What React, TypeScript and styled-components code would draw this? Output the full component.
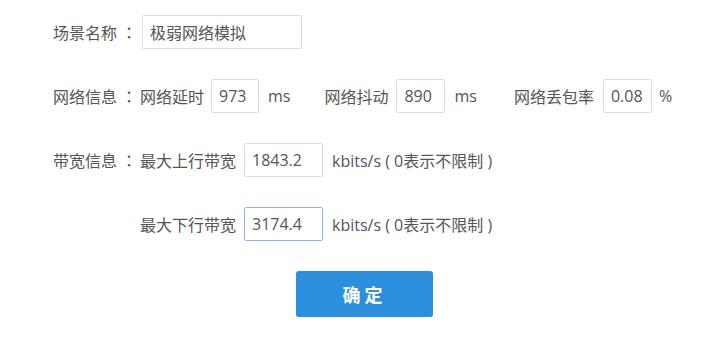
import styled, { createGlobalStyle } from "styled-components";

const GlobalStyle = createGlobalStyle`
  body {
    margin: 0;
    background: #fff;
    font-family: "Open Sans", "Noto Sans CJK SC", sans-serif;
    font-size: 16px;
    color: #555;
  }
`;

const Form = styled.div`
  display: flex;
  flex-direction: column;
  gap: 30px;
  padding: 15px 0 0 53px;
`;

const Row = styled.div<{ $indent?: boolean }>`
  display: flex;
  align-items: center;
  height: 34px;
  padding-left: ${(p) => (p.$indent ? "87px" : "0")};
`;

const Label = styled.span`
  display: flex;
  width: 87px;
  white-space: nowrap;
`;

const Colon = styled.span`
  font-family: "Noto Sans CJK TC", sans-serif;
  margin-left: 4px;
`;

const Group = styled.div<{ $ml?: number }>`
  display: flex;
  align-items: center;
  margin-left: ${(p) => p.$ml ?? 0}px;
`;

const Name = styled.span`
  white-space: nowrap;
`;

const Input = styled.input<{ $w: number; $focus?: boolean; $ml?: number; $mr?: number }>`
  box-sizing: border-box;
  width: ${(p) => p.$w}px;
  height: 34px;
  margin-left: ${(p) => p.$ml ?? 8}px;
  margin-right: ${(p) => p.$mr ?? 9}px;
  padding: 0 7px;
  border: 1px solid ${(p) => (p.$focus ? "#8db8e8" : "#dcdcdc")};
  border-radius: 2px;
  font-family: "Open Sans", "Noto Sans CJK SC", sans-serif;
  font-size: 16px;
  color: #555;
  outline: none;
  background: #fff;
`;

const Unit = styled.span`
  white-space: nowrap;
`;

const ButtonRow = styled.div`
  display: flex;
  padding-left: 243px;
`;

const Submit = styled.button`
  width: 137px;
  height: 46px;
  padding: 0;
  border: none;
  border-radius: 3px;
  background: #2b8fde;
  box-shadow: 0 1px 1px rgba(0, 0, 0, 0.15);
  color: #fff;
  font-family: "Noto Sans CJK SC", sans-serif;
  font-size: 18px;
  font-weight: 700;
  letter-spacing: 4px;
  cursor: pointer;
`;

export default function App() {
  return (
    <>
      <GlobalStyle />
      <Form>
        <Row>
          <Label>
            场景名称<Colon>：</Colon>
          </Label>
          <Input $w={160} $ml={2} defaultValue="极弱网络模拟" />
        </Row>
        <Row>
          <Label>
            网络信息<Colon>：</Colon>
          </Label>
          <Group>
            <Name>网络延时</Name>
            <Input $w={48} $ml={7} defaultValue="973" />
            <Unit>ms</Unit>
          </Group>
          <Group $ml={34}>
            <Name>网络抖动</Name>
            <Input $w={49} defaultValue="890" />
            <Unit>ms</Unit>
          </Group>
          <Group $ml={37}>
            <Name>网络丢包率</Name>
            <Input $w={49} $ml={9} $mr={7} defaultValue="0.08" />
            <Unit>%</Unit>
          </Group>
        </Row>
        <Row>
          <Label>
            带宽信息<Colon>：</Colon>
          </Label>
          <Group>
            <Name>最大上行带宽</Name>
            <Input $w={79} defaultValue="1843.2" />
            <Unit>kbits/s ( 0表示不限制 )</Unit>
          </Group>
        </Row>
        <Row $indent>
          <Group>
            <Name>最大下行带宽</Name>
            <Input $w={79} $focus defaultValue="3174.4" />
            <Unit>kbits/s ( 0表示不限制 )</Unit>
          </Group>
        </Row>
        <ButtonRow>
          <Submit>确定</Submit>
        </ButtonRow>
      </Form>
    </>
  );
}
